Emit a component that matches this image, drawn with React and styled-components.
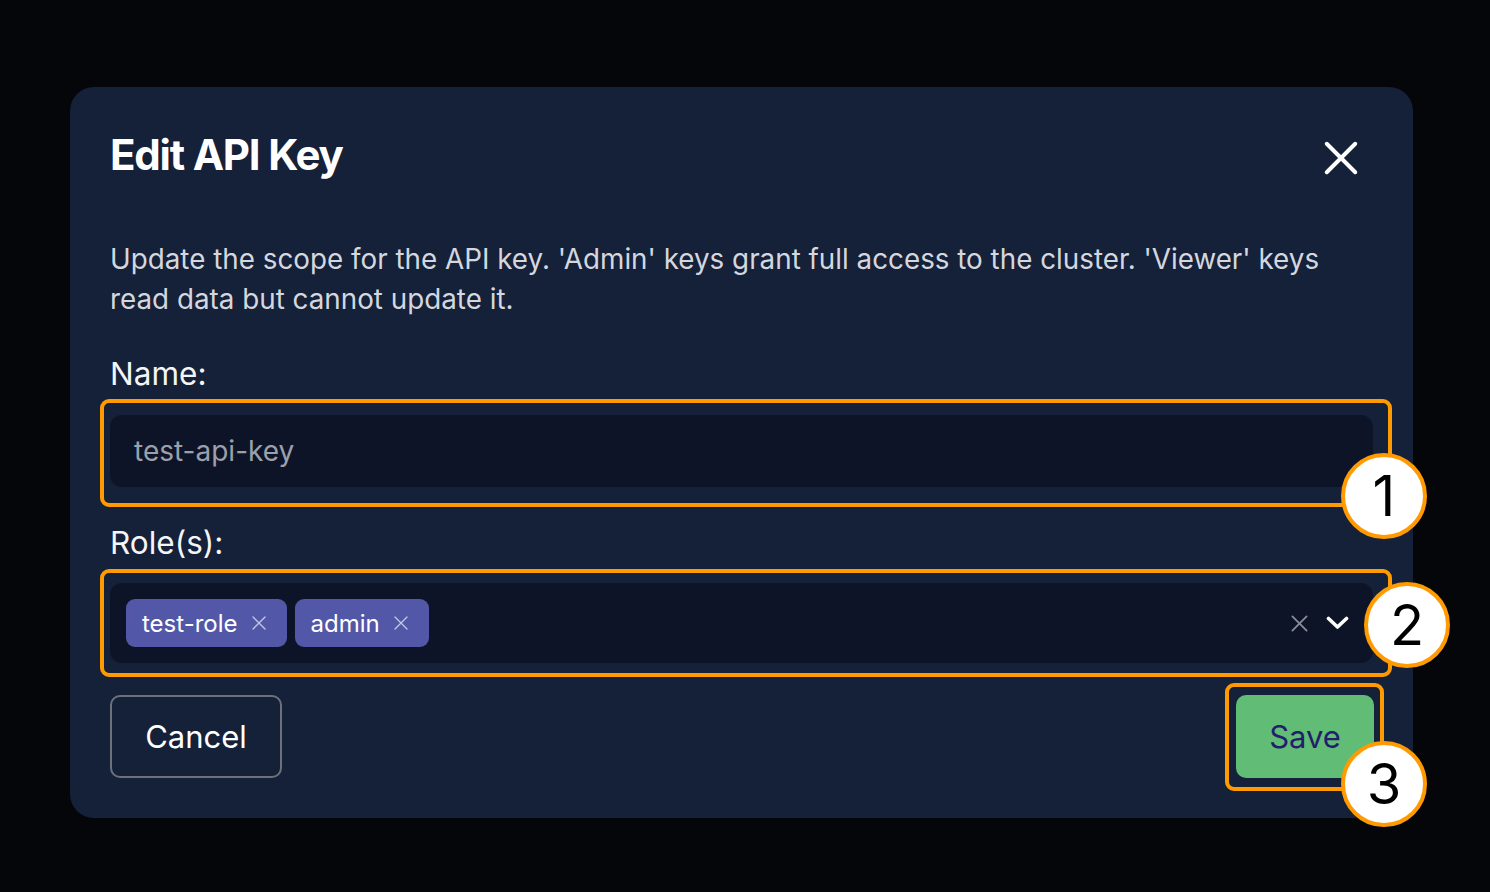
import React from 'react';
import styled, { createGlobalStyle } from 'styled-components';

const GlobalStyle = createGlobalStyle`
  html, body {
    margin: 0;
    padding: 0;
    background: #05060a;
    font-family: Inter, "Noto Sans", sans-serif;
  }
`;

const Backdrop = styled.div`
  width: 1490px;
  height: 892px;
  padding: 87px 0 0 70px;
  box-sizing: border-box;
  background: #05060a;
`;

const Modal = styled.div`
  width: 1343px;
  height: 731px;
  box-sizing: border-box;
  padding: 44px 40px 40px 40px;
  background: #152039;
  border-radius: 24px;
  display: flex;
  flex-direction: column;
`;

const Header = styled.div`
  display: flex;
  align-items: center;
  justify-content: space-between;
  height: 48px;
`;

const Title = styled.h2`
  margin: 0;
  font-size: 42px;
  line-height: 48px;
  font-weight: 700;
  letter-spacing: -1.2px;
  color: #ffffff;
`;

const CloseButton = styled.button`
  border: none;
  background: none;
  padding: 0;
  margin: 6px 13px 0 0;
  display: flex;
  cursor: pointer;
`;

const Description = styled.p`
  margin: 60px 0 0 0;
  padding-right: 24px;
  font-size: 27.8px;
  line-height: 40px;
  color: #d4d7de;
`;

const Label = styled.label`
  display: block;
  margin-top: ${p => p.$top}px;
  font-size: 31.5px;
  line-height: 36px;
  color: #f4f5f7;
`;

const Highlight = styled.div`
  position: relative;
  border: 4px solid #ff9a00;
  border-radius: 9px;
  padding: ${p => p.$pad};
  margin: ${p => p.$margin};
`;

const Badge = styled.div`
  position: absolute;
  width: 86px;
  height: 86px;
  box-sizing: border-box;
  border-radius: 50%;
  border: 4px solid #ff9a00;
  background: #ffffff;
  color: #000000;
  display: flex;
  align-items: center;
  justify-content: center;
  font-size: 56px;
  font-weight: 400;
  z-index: 2;
`;

const TextInput = styled.div`
  height: 72px;
  box-sizing: border-box;
  padding-left: 24px;
  display: flex;
  align-items: center;
  background: #0e1428;
  border-radius: 12px;
  font-size: 28px;
  color: #9ca0aa;
`;

const Select = styled.div`
  height: 80px;
  box-sizing: border-box;
  padding: 0 24px 0 16px;
  display: flex;
  align-items: center;
  background: #0e1428;
  border-radius: 12px;
`;

const Chips = styled.div`
  display: flex;
  gap: 8px;
  flex: 1;
`;

const Chip = styled.span`
  height: 48px;
  box-sizing: border-box;
  padding: 0 20px 0 16px;
  display: inline-flex;
  align-items: center;
  gap: 13px;
  background: #5258a7;
  border-radius: 9px;
  font-size: 24px;
  color: #ffffff;
`;

const Indicators = styled.div`
  display: flex;
  align-items: center;
  gap: 17px;
`;

const Footer = styled.div`
  margin-top: 18px;
  display: flex;
  align-items: flex-start;
  justify-content: space-between;
`;

const Button = styled.button`
  height: 83px;
  box-sizing: border-box;
  border-radius: 10px;
  font-family: inherit;
  font-size: 31px;
  padding: 0;
  cursor: pointer;
  display: flex;
  align-items: center;
  justify-content: center;
`;

const CancelButton = styled(Button)`
  width: 172px;
  background: transparent;
  border: 2px solid #6d717c;
  color: #ffffff;
`;

const SaveButton = styled(Button)`
  width: 138px;
  background: #61bd75;
  border: none;
  color: #221e6c;
`;

const XIcon = ({ size, color, width }) => (
  <svg width={size} height={size} viewBox="0 0 24 24" fill="none" stroke={color} strokeWidth={width} strokeLinecap="round">
    <path d="M3 3 L21 21 M21 3 L3 21" />
  </svg>
);

const Chevron = () => (
  <svg width="23" height="14" viewBox="0 0 23 14" fill="none" stroke="#ffffff" strokeWidth="3.6" strokeLinecap="round" strokeLinejoin="round">
    <path d="M2.5 2.5 L11.5 11 L20.5 2.5" />
  </svg>
);

export default function App() {
  return (
    <Backdrop>
      <GlobalStyle />
      <Modal>
        <Header>
          <Title>Edit API Key</Title>
          <CloseButton aria-label="close">
            <XIcon size={38} color="#ffffff" width={2.5} />
          </CloseButton>
        </Header>
        <Description>
          Update the scope for the API key. 'Admin' keys grant full access to the cluster. 'Viewer' keys
          read data but cannot update it.
        </Description>

        <Label $top={37}>Name:</Label>
        <Highlight $pad="12px 15px 16px 6px" $margin="7px -19px 0 -10px">
          <TextInput>test-api-key</TextInput>
          <Badge style={{ right: -39, bottom: -36 }}>1</Badge>
        </Highlight>

        <Label $top={18}>Role(s):</Label>
        <Highlight $pad="10px 15px 10px 6px" $margin="8px -19px 0 -10px">
          <Select>
            <Chips>
              <Chip>
                test-role
                <XIcon size={16} color="#c3c6e4" width={2} />
              </Chip>
              <Chip>
                admin
                <XIcon size={16} color="#c3c6e4" width={2} />
              </Chip>
            </Chips>
            <Indicators>
              <XIcon size={19} color="#8b8f99" width={2.2} />
              <Chevron />
            </Indicators>
          </Select>
          <Badge style={{ right: -62, top: 9 }}>2</Badge>
        </Highlight>

        <Footer>
          <CancelButton>Cancel</CancelButton>
          <Highlight $pad="8px 6px 9px 7px" $margin="-12px -11px 0 0">
            <SaveButton>Save</SaveButton>
            <Badge style={{ right: -47, bottom: -40 }}>3</Badge>
          </Highlight>
        </Footer>
      </Modal>
    </Backdrop>
  );
}
